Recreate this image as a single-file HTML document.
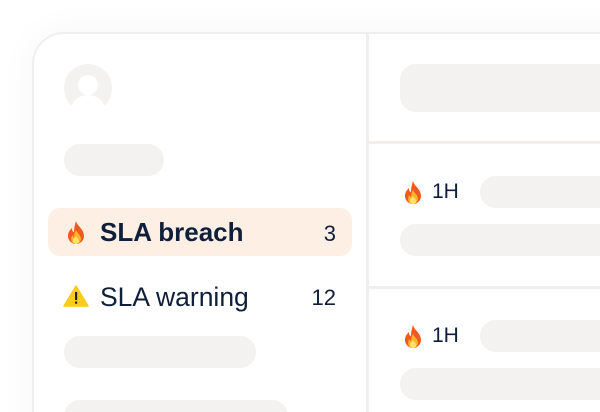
<!DOCTYPE html><html><head><style>
html,body{margin:0;width:600px;height:412px;overflow:hidden}
body{background:#fff;font-family:"Liberation Sans",sans-serif;color:#0f1f3a}
.w{position:relative;width:600px;height:412px;overflow:hidden}
.card{position:absolute;left:32px;top:32px;width:640px;height:460px;border:2px solid #f0efed;border-radius:32px;background:#fff;box-shadow:0 0 40px rgba(0,0,0,0.04)}
.p{position:absolute;background:#f3f2f0;border-radius:16px}
.a{position:absolute}
</style></head><body><div class="w">
<div class="card"></div>
<div class="a" style="left:366px;top:34px;width:3px;height:378px;background:#f0efed"></div>
<div class="a" style="left:369px;top:141px;width:231px;height:3px;background:#f0efed"></div>
<div class="a" style="left:369px;top:286px;width:231px;height:3px;background:#f0efed"></div>
<svg class="a" style="left:64px;top:64px" width="48" height="48" viewBox="0 0 48 48"><defs><clipPath id="c"><circle cx="24" cy="24" r="24"/></clipPath></defs><circle cx="24" cy="24" r="24" fill="#f3f2f0"/><g clip-path="url(#c)"><circle cx="24" cy="21" r="10" fill="#fff"/><ellipse cx="24" cy="46" rx="17" ry="15" fill="#fff"/></g></svg>
<div class="p" style="left:64px;top:144px;width:100px;height:32px"></div>
<div class="a" style="left:48px;top:208px;width:304px;height:48px;background:#feefe4;border-radius:12px"></div>
<svg class="a" style="left:65px;top:220px" width="22" height="24" viewBox="0 0 22 24"><path d="M11 1C12 6 19 9 19 16a8 8 0 0 1-16 0c0-4 2-6 4-8 0 3 1 4 2 4 0-4 1-8 2-11z" fill="#f25a1d"/><path d="M11 10c1 3 5 5 5 9a5 5 0 0 1-10 0c0-2 1-3 2-4 0 2 1 2 1 2 0-3 1-5 2-7z" fill="#ffb32b"/><path d="M11 16c1 2 3 3 3 5a3 3 0 0 1-6 0c0-2 2-3 3-5z" fill="#ffe36b"/></svg>
<div class="a" style="left:100px;top:217px;font-size:26px;font-weight:bold;line-height:30px">SLA breach</div>
<div class="a" style="left:300px;width:36px;text-align:right;top:220px;font-size:22px;line-height:28px">3</div>
<svg class="a" style="left:63px;top:285px" width="26" height="22" viewBox="0 0 26 22"><path d="M13 1L25 21H1z" fill="#fccc1a" stroke="#fccc1a" stroke-linejoin="round" stroke-width="1.5"/><rect x="12" y="7" width="2.2" height="8" fill="#222"/><rect x="12" y="16.5" width="2.2" height="2.2" fill="#222"/></svg>
<div class="a" style="left:100px;top:282px;font-size:26.5px;line-height:30px">SLA warning</div>
<div class="a" style="left:290px;width:46px;text-align:right;top:284px;font-size:22px;line-height:28px">12</div>
<div class="p" style="left:64px;top:336px;width:192px;height:32px"></div>
<div class="p" style="left:64px;top:400px;width:224px;height:32px"></div>
<div class="p" style="left:400px;top:64px;width:220px;height:48px"></div>
<svg class="a" style="left:402px;top:180px" width="22" height="24" viewBox="0 0 22 24"><path d="M11 1C12 6 19 9 19 16a8 8 0 0 1-16 0c0-4 2-6 4-8 0 3 1 4 2 4 0-4 1-8 2-11z" fill="#f25a1d"/><path d="M11 10c1 3 5 5 5 9a5 5 0 0 1-10 0c0-2 1-3 2-4 0 2 1 2 1 2 0-3 1-5 2-7z" fill="#ffb32b"/><path d="M11 16c1 2 3 3 3 5a3 3 0 0 1-6 0c0-2 2-3 3-5z" fill="#ffe36b"/></svg>
<div class="a" style="left:432px;top:180px;font-size:21px;line-height:24px">1H</div>
<div class="p" style="left:480px;top:176px;width:140px;height:32px"></div>
<div class="p" style="left:400px;top:224px;width:220px;height:32px"></div>
<svg class="a" style="left:402px;top:324px" width="22" height="24" viewBox="0 0 22 24"><path d="M11 1C12 6 19 9 19 16a8 8 0 0 1-16 0c0-4 2-6 4-8 0 3 1 4 2 4 0-4 1-8 2-11z" fill="#f25a1d"/><path d="M11 10c1 3 5 5 5 9a5 5 0 0 1-10 0c0-2 1-3 2-4 0 2 1 2 1 2 0-3 1-5 2-7z" fill="#ffb32b"/><path d="M11 16c1 2 3 3 3 5a3 3 0 0 1-6 0c0-2 2-3 3-5z" fill="#ffe36b"/></svg>
<div class="a" style="left:432px;top:324px;font-size:21px;line-height:24px">1H</div>
<div class="p" style="left:480px;top:320px;width:140px;height:32px"></div>
<div class="p" style="left:400px;top:368px;width:220px;height:32px"></div>
</div></body></html>
